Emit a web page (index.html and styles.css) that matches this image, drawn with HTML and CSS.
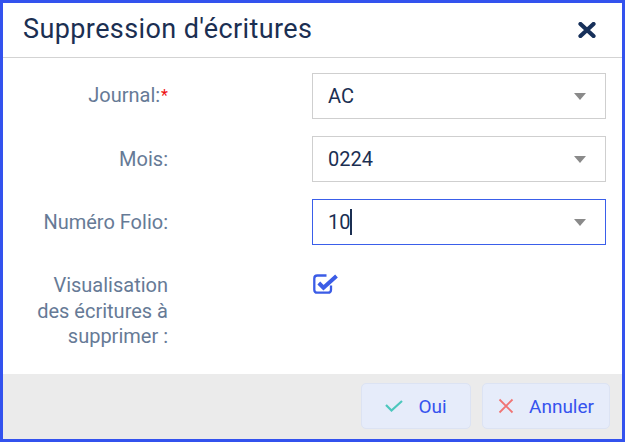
FILE: index.html
```html
<!DOCTYPE html>
<html lang="fr">
<head>
<meta charset="utf-8">
<link rel="stylesheet" href="styles.css">
</head>
<body>
<div class="dialog">
  <div class="header">
    <h1 class="title">Suppression d'écritures</h1>
    <svg class="close" width="18" height="16" viewBox="0 0 18 16"><path d="M2.5 2 L15.5 14 M15.5 2 L2.5 14" stroke="#17305a" stroke-width="4.2" stroke-linecap="round"/></svg>
  </div>
  <div class="body">
    <div class="form">
      <label class="lbl">Journal:<span class="req">*</span></label>
      <div class="select"><span class="val">AC</span><span class="caret"></span></div>

      <label class="lbl">Mois:</label>
      <div class="select"><span class="val">0224</span><span class="caret"></span></div>

      <label class="lbl">Numéro Folio:</label>
      <div class="select focused"><span class="val">10<span class="cursor"></span></span><span class="caret"></span></div>

      <label class="lbl multi">Visualisation<br>des écritures à<br>supprimer :</label>
      <div class="check">
        <svg width="27" height="22" viewBox="0 0 27 22"><path d="M13.5 1.5 H4.3 Q1.3 1.5 1.3 4.5 V15.7 Q1.3 18.7 4.3 18.7 H15 Q18 18.7 18 15.7 V11.5" fill="none" stroke="#3b5ce6" stroke-width="2.3"/><path d="M5.8 9 L10.5 13.7 L23.5 2" fill="none" stroke="#3b5ce6" stroke-width="4" stroke-linejoin="miter"/></svg>
      </div>
    </div>
  </div>
  <div class="footer">
    <button class="btn btn-ok"><svg width="18" height="12" viewBox="0 0 18 12"><path d="M1 5 L6.5 10.5 L17 1" fill="none" stroke="#4cc7bd" stroke-width="2.2"/></svg><span>Oui</span></button>
    <button class="btn btn-cancel"><svg width="16" height="16" viewBox="0 0 16 16"><path d="M1.5 1.5 L14.5 14.5 M14.5 1.5 L1.5 14.5" stroke="#f07474" stroke-width="1.8"/></svg><span>Annuler</span></button>
  </div>
</div>
</body>
</html>
```

FILE: styles.css
```css
* { box-sizing: border-box; }
html, body { margin: 0; padding: 0; background: #fff; }
body { font-family: Roboto, "Liberation Sans", sans-serif; }

.dialog {
  width: 625px;
  height: 442px;
  border: 3px solid #3352ee;
  display: flex;
  flex-direction: column;
  background: #fff;
}

.header {
  height: 55px;
  flex: none;
  border-bottom: 1px solid #d3d3d3;
  display: flex;
  align-items: center;
  justify-content: space-between;
  padding: 0 26px 2px 20px;
}
.title {
  margin: 0;
  font-size: 27px;
  letter-spacing: 0.4px;
  font-weight: 400;
  color: #1b2f52;
}
.close { display: block; margin-top: 1px; }

.body {
  flex: 1;
  padding-top: 15px;
}
.form {
  display: grid;
  grid-template-columns: 165px 294px;
  column-gap: 144px;
  row-gap: 17px;
  align-items: center;
}
.lbl {
  text-align: right;
  font-size: 20px;
  color: #667a96;
  line-height: 22px;
}
.req { color: #ee1111; font-size: 16px; margin-left: 1px; position: relative; top: -1px; }
.lbl.multi {
  align-self: start;
  line-height: 25.5px;
  margin-top: 11px;
}

.select {
  height: 46px;
  border: 1px solid #cfcfcf;
  display: flex;
  align-items: center;
  justify-content: space-between;
  padding: 0 19px 0 15px;
  font-size: 20px;
  color: #1b2f52;
}
.select.focused { border-color: #3a5eea; }
.val { display: flex; align-items: center; }
.cursor {
  display: inline-block;
  width: 2px;
  height: 26px;
  background: #1b2f52;
}
.caret {
  width: 0; height: 0;
  border-left: 6.5px solid transparent;
  border-right: 6.5px solid transparent;
  border-top: 7px solid #8a8a8a;
}

.check {
  align-self: start;
  margin-top: 12px;
  padding-left: 1px;
  height: 22px;
}
.check svg { display: block; }

.footer {
  height: 65px;
  flex: none;
  background: #ebebeb;
  display: flex;
  justify-content: flex-end;
  align-items: flex-start;
  padding: 9px 12px 0 0;
  gap: 11px;
}
.btn {
  height: 46px;
  border: 1px solid #dce3f3;
  border-radius: 5px;
  background: #e6ecfa;
  display: flex;
  align-items: center;
  justify-content: center;
  gap: 15px;
  font-family: Roboto, "Liberation Sans", sans-serif;
  font-size: 19px;
  color: #3653ee;
  padding: 0;
}
.btn svg { display: block; }
.btn-ok { width: 110px; }
.btn-cancel { width: 128px; }
```
